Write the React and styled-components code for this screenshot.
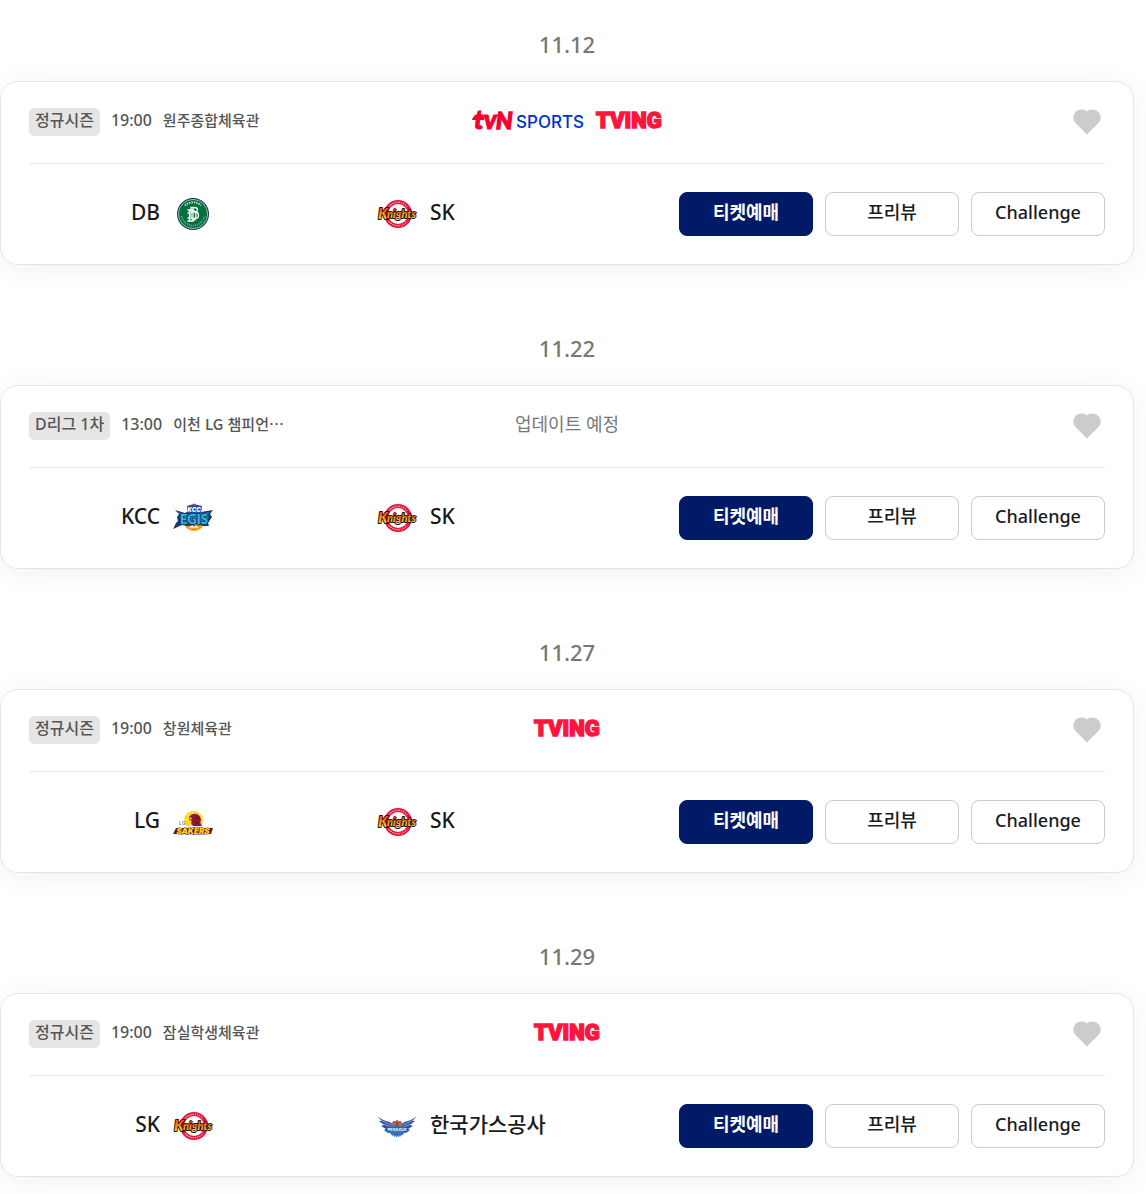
import React, { useState } from 'react';
import styled, { createGlobalStyle } from 'styled-components';

const GlobalStyle = createGlobalStyle`
  * {
    box-sizing: border-box;
  }

  body {
    margin: 0;
    background: #fff;
    color: #1a1a1a;
    font-family: "Noto Sans", "Noto Sans CJK KR", sans-serif;
  }

  button {
    font-family: inherit;
  }
`;

const Page = styled.main`
  padding: 9px 12px 0 0;
`;

const Day = styled.section`
  padding-bottom: 48px;
`;

const DateTitle = styled.h2`
  margin: 0;
  height: 72px;
  padding-top: 17px;
  text-align: center;
  font-size: 22px;
  font-weight: 500;
  line-height: 36px;
  color: #777;
`;

const Card = styled.article`
  padding: 0 28px;
  border: 1px solid #e5e5e5;
  border-radius: 18px;
  background: #fff;
  box-shadow: 0 4px 30px rgba(0, 0, 0, 0.06);
`;

const CardTop = styled.header`
  display: grid;
  grid-template-columns: minmax(0, 1fr) auto minmax(0, 1fr);
  align-items: center;
  padding: 26px 0 27px;
  border-bottom: 1px solid #e5e5e5;
`;

const Info = styled.div`
  display: flex;
  gap: 11px;
  height: 28px;
  font-size: 16px;
  font-weight: 500;
  line-height: 24px;
  color: #555;
  white-space: nowrap;
`;

const Badge = styled.span`
  padding: 0 6px;
  border-radius: 5px;
  background: #e5e5e5;
`;

const Place = styled.span`
  font-family: "Noto Sans CJK KR", sans-serif;
  font-size: 15px;
`;

const Broadcast = styled.div`
  display: flex;
  align-items: center;
  justify-content: center;
  gap: 12px;
  height: 28px;
`;

const Pending = styled.p`
  margin: 0;
  height: 28px;
  font-size: 18px;
  line-height: 24px;
  color: #777;
`;

const LikeButton = styled.button`
  display: grid;
  place-items: center;
  justify-self: end;
  width: 36px;
  height: 28px;
  padding: 0;
  border: 0;
  background: none;
  color: ${(props) => (props.$liked ? '#e60033' : '#ccc')};
  cursor: pointer;
`;

const CardBody = styled.div`
  display: flex;
  align-items: center;
  padding: 28px 0;
`;

const Teams = styled.div`
  flex: 1;
  display: grid;
  grid-template-columns: 184fr 164fr 302fr;
`;

const Team = styled.div`
  display: flex;
  align-items: center;
  justify-content: ${(props) => (props.$home ? 'flex-end' : 'flex-start')};
  grid-column: ${(props) => (props.$home ? 1 : 3)};
  gap: 13px;
  height: 44px;
  white-space: nowrap;
`;

const TeamName = styled.strong`
  padding-bottom: 4px;
  font-size: 21px;
  font-weight: 500;
  line-height: 32px;
`;

const Buttons = styled.div`
  display: grid;
  grid-template-columns: repeat(3, 134px);
  gap: 12px;
`;

const Button = styled.button`
  height: 44px;
  padding: 0 0 4px;
  border: 1px solid ${(props) => (props.$primary ? '#001a66' : '#ccc')};
  border-radius: 8px;
  background: ${(props) => (props.$primary ? '#001a66' : '#fff')};
  color: ${(props) => (props.$primary ? '#fff' : '#1a1a1a')};
  font-size: 18px;
  font-weight: ${(props) => (props.$primary ? 700 : 500)};
  line-height: 24px;
  cursor: pointer;
`;

const Logo = styled.svg`
  display: block;
  flex: none;
  overflow: visible;
`;

function HeartIcon() {
  return (
    <svg width="28" height="26" viewBox="0 0 28 26" aria-hidden="true">
      <path
        fill="currentColor"
        d="M14 25.5 2.7 14.2C-.5 11-.4 6 2.7 3 5.8-.1 11-.1 14 2.6 17-.1 22.2-.1 25.3 3c3.1 3 3.2 8 0 11.2Z"
      />
    </svg>
  );
}

function TvnLogo() {
  return (
    <Logo width="112" height="28" viewBox="0 0 112 28" role="img" aria-label="tvN SPORTS">
      <g fill="#f5002f" stroke="#f5002f" fontFamily="Lato, sans-serif" fontWeight="900" fontStyle="italic">
        <text x="2" y="21" fontSize="26" strokeWidth="1">tv</text>
        <text x="24" y="21" fontSize="23" strokeWidth="1.4">N</text>
      </g>
      <path d="M1 9h12l-1 3H0z" fill="#f5002f" />
      <text x="44" y="20" fill="#0032c8" fontFamily="Inter, sans-serif" fontSize="17" fontWeight="500">
        SPORTS
      </text>
    </Logo>
  );
}

function TvingLogo() {
  return (
    <Logo width="67" height="28" viewBox="0 0 67 28" role="img" aria-label="TVING">
      <text x="0" y="20" fill="#ff153c" stroke="#ff153c" strokeWidth="1.5" fontFamily="Roboto, sans-serif" fontSize="22" fontWeight="900">
        TVING
      </text>
    </Logo>
  );
}

function DbLogo() {
  return (
    <Logo width="40" height="40" viewBox="0 0 40 40" aria-hidden="true">
      <circle cx="20" cy="20" r="16" fill="#16335a" />
      <circle cx="20" cy="20" r="14.6" fill="#04713c" stroke="#c4d9d0" strokeWidth="0.8" />
      <path d="M12 11.5a11.7 11.7 0 0 1 16 0" fill="none" stroke="#c6ddd0" strokeWidth="2" strokeDasharray="1.4 1" />
      <path d="M8.500 22a11.700 11.700 0 0 0 23 0" fill="none" stroke="#8dbaa2" strokeWidth="1.400" strokeDasharray="1 1" />
      <g fill="none" stroke="#fff" strokeWidth="1.300">
        <path d="M18 13.500h3.500q3 0 3 2.200t-3 2.300H18zM18 18h4q3.500 0 3.500 3.200T22 24.500h-4z" />
        <path d="M14.500 16H20q3 1 3 5.500t-3 5.500h-5.500M16.500 16v11M14.500 19h2M14.500 24h2M20 13.500V27" />
      </g>
    </Logo>
  );
}

function KnightsLogo() {
  return (
    <Logo width="40" height="40" viewBox="0 0 40 40" aria-hidden="true">
      <defs>
        <linearGradient id="knights" x1="0" y1="0" x2="0" y2="1">
          <stop offset="0.3" stopColor="#ee5a24" />
          <stop offset="0.8" stopColor="#fbc440" />
        </linearGradient>
      </defs>
      <circle cx="21" cy="20" r="12" fill="#fff" stroke="#e5173f" strokeWidth="4" />
      <path d="M12 12.500a11.700 11.700 0 0 1 18 0M12 27.500a11.700 11.700 0 0 0 18 0" fill="none" stroke="#f9bcc6" strokeWidth="1.200" strokeDasharray="1.200 1" />
      <g fontFamily="Lato, sans-serif" fontStyle="italic" fontWeight="900" fill="url(#knights)" stroke="#20130f" strokeWidth="1.800" strokeLinejoin="round" paintOrder="stroke">
        <text x="1" y="25" fontSize="15">K</text>
        <text x="10" y="24" fontSize="11">nights</text>
      </g>
    </Logo>
  );
}

function EgisLogo() {
  return (
    <Logo width="40" height="40" viewBox="0 0 40 40" aria-hidden="true">
      <circle cx="21" cy="22" r="10.800" fill="#f29a1f" />
      <path d="M11 25q10 6 20 0M21 12v20" fill="none" stroke="#a95a18" />
      <path d="M2 12l10 3 4-2 12 1 12-2-3 4 2 3-4 6 1 3-6 0-5-2-11 2-5-1-9 4 3-6 2-2-1-4 2-3z" fill="#123c60" />
      <path d="M5 14l7 2 19-1 6-1-3 3 2 2-3 5 0 2-4-1-12 1-4-2-6 3 2-5-1-5z" fill="#1687bd" />
      <text x="21" y="26" fontFamily="Lato, sans-serif" fontSize="13" fontWeight="900" textAnchor="middle" fill="#36b7e6" stroke="#123c60" strokeWidth="1.600" paintOrder="stroke">
        EGIS
      </text>
      <path d="M14 8l3-1 4-1 4 1 4 1-1 7H14z" fill="#1b4fa0" />
      <circle cx="21" cy="6.500" r="1" fill="#e83a3a" />
      <text x="21" y="14" fontFamily="Inter, sans-serif" fontSize="6" fontWeight="900" fontStyle="italic" textAnchor="middle" fill="#fff">
        KCC
      </text>
      <path d="M17 30l2-2 2 2 2-2 2 2" fill="none" stroke="#fff" strokeWidth="1.200" />
    </Logo>
  );
}

function SakersLogo() {
  return (
    <Logo width="40" height="40" viewBox="0 0 40 40" aria-hidden="true">
      <path d="M13 24a9.500 9.500 0 1 1 15 0z" fill="#ffd51f" />
      <path d="M20 8v7M13 11l4 5M27 11l-4 5M11 18h7" stroke="#fff3a0" strokeWidth="0.800" />
      <path d="M16 15q3-4 7-3 5 1 5 7l-1 1 2 4h-9l-2-3 1-2-3-1z" fill="#8f1838" />
      <path d="M16 16l2-1 1 2-2 1z" fill="#f5b91d" />
      <path d="M21 16l4-1 1 3M22 20l3 2" fill="none" stroke="#4b1022" />
      <text x="6" y="23" fontFamily="Inter, sans-serif" fontSize="5" fontWeight="600" fill="#888">
        LG
      </text>
      <path d="M3 26h37l-2 6H0z" fill="#64162b" />
      <text x="20" y="32" fontFamily="Inter, sans-serif" fontSize="8" fontWeight="900" fontStyle="italic" textAnchor="middle" fill="#ffd21c" stroke="#64162b" strokeWidth="1" paintOrder="stroke">
        SAKERS
      </text>
    </Logo>
  );
}

function PegasusLogo() {
  return (
    <Logo width="40" height="40" viewBox="0 0 40 40" aria-hidden="true">
      <path d="M0 10q6 5 13 6l5 9-7 2-4-3 2-1-5-3 3-1-5-4 3 0z" fill="#314c9d" />
      <path d="M40 10q-6 5-13 6l-5 9 7 2 4-3-2-1 5-3-3-1 5-4-3 0z" fill="#314c9d" />
      <path d="M3 14l11 5M6 18l8 3M37 14l-11 5M34 18l-8 3" stroke="#91aee0" strokeWidth="0.900" />
      <circle cx="20" cy="23" r="8.300" fill="#3672bb" />
      <circle cx="20" cy="20" r="5.500" fill="#ec7032" />
      <path d="M15 19h10M20 14v10M16 16q4 3 8 0" fill="none" stroke="#713c3b" strokeWidth="0.800" />
      <path d="M9 22q11-4 22 0l-2 4q-9-2-18 0z" fill="#2468b1" />
      <text x="20" y="25" fontFamily="Inter, sans-serif" fontSize="4" fontWeight="900" textAnchor="middle" fill="#c5eaff">
        PEGASUS
      </text>
      <path d="M14 29q6 3 12 0" fill="none" stroke="#e0ecf5" strokeWidth="1.200" strokeDasharray="1 1" />
    </Logo>
  );
}

const teams = {
  db: { name: 'DB', Logo: DbLogo },
  sk: { name: 'SK', Logo: KnightsLogo },
  kcc: { name: 'KCC', Logo: EgisLogo },
  lg: { name: 'LG', Logo: SakersLogo },
  kogas: { name: '한국가스공사', Logo: PegasusLogo },
};

const games = [
  { date: '11.12', league: '정규시즌', time: '19:00', place: '원주종합체육관', tv: ['tvn', 'tving'], home: 'db', away: 'sk' },
  { date: '11.22', league: 'D리그 1차', time: '13:00', place: '이천 LG 챔피언…', tv: [], home: 'kcc', away: 'sk' },
  { date: '11.27', league: '정규시즌', time: '19:00', place: '창원체육관', tv: ['tving'], home: 'lg', away: 'sk' },
  { date: '11.29', league: '정규시즌', time: '19:00', place: '잠실학생체육관', tv: ['tving'], home: 'sk', away: 'kogas' },
];

function Game({ game }) {
  const [liked, setLiked] = useState(false);
  const home = teams[game.home];
  const away = teams[game.away];

  return (
    <Day>
      <DateTitle>{game.date}</DateTitle>
      <Card>
        <CardTop>
          <Info>
            <Badge>{game.league}</Badge>
            <span>{game.time}</span>
            <Place>{game.place}</Place>
          </Info>
          {game.tv.length > 0 ? (
            <Broadcast>
              {game.tv.includes('tvn') && <TvnLogo />}
              {game.tv.includes('tving') && <TvingLogo />}
            </Broadcast>
          ) : (
            <Pending>업데이트 예정</Pending>
          )}
          <LikeButton type="button" aria-label="관심 경기" aria-pressed={liked} $liked={liked} onClick={() => setLiked(!liked)}>
            <HeartIcon />
          </LikeButton>
        </CardTop>
        <CardBody>
          <Teams>
            <Team $home>
              <TeamName>{home.name}</TeamName>
              <home.Logo />
            </Team>
            <Team>
              <away.Logo />
              <TeamName>{away.name}</TeamName>
            </Team>
          </Teams>
          <Buttons>
            <Button type="button" $primary>티켓예매</Button>
            <Button type="button">프리뷰</Button>
            <Button type="button">Challenge</Button>
          </Buttons>
        </CardBody>
      </Card>
    </Day>
  );
}

function App() {
  return (
    <Page lang="ko">
      <GlobalStyle />
      {games.map((game) => (
        <Game key={game.date} game={game} />
      ))}
    </Page>
  );
}

export default App;
